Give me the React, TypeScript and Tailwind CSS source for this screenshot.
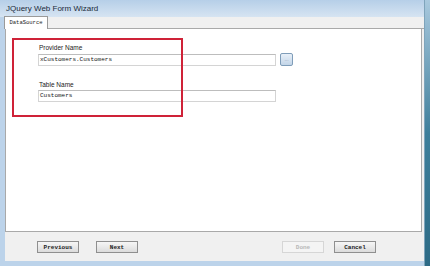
import React from "react";

// ─── Small pieces ─────────────────────────────────────────────────────────────

function Field({ label, value, browse }: { label: string; value: string; browse?: boolean }) {
  return (
    <div className="flex flex-col">
      <span className="h-[9px] pl-[1px] text-[6.5px] leading-[9px] text-[#222] font-['Liberation_Sans',sans-serif]">
        {label}
      </span>
      <div className="mt-[1px] flex items-center gap-[4px]">
        <div className="w-[238px] h-[12px] border border-[#d4d4d4] border-t-[#bdbdbd] bg-white pl-[1px] text-[6px] leading-[10px] text-[#111] font-['Liberation_Mono',monospace]">
          {value}
        </div>
        {browse && (
          <div className="w-[13px] h-[13px] rounded-[2px] border border-[#7f9db9] bg-gradient-to-b from-[#e8f0f8] to-[#c3d5e8] flex items-center justify-center">
            <span className="text-[5px] leading-[5px] text-[#8a9bb0] font-['Liberation_Sans',sans-serif]">...</span>
          </div>
        )}
      </div>
    </div>
  );
}

function WizButton({ label, disabled }: { label: string; disabled?: boolean }) {
  return (
    <div
      className={`w-[42px] h-[12px] border flex items-center justify-center text-[6px] font-bold font-['Liberation_Mono',monospace] ${
        disabled
          ? "border-[#d6d6d6] bg-[#f4f4f4] text-[#b8b8b8]"
          : "border-[#8f8f8f] bg-gradient-to-b from-[#f6f6f6] to-[#dcdcdc] text-[#222]"
      }`}
    >
      {label}
    </div>
  );
}

// ─── Wizard window ────────────────────────────────────────────────────────────

export default function App() {
  return (
    <div className="relative w-[430px] h-[266px] flex bg-[#bcd3ea] overflow-hidden">
      {/* Window body */}
      <div className="w-[424px] flex flex-col">
        {/* Title bar */}
        <div className="h-[17px] shrink-0 bg-gradient-to-b from-[#b6cfe8] to-[#d6e4f2] pl-[6px] flex items-center">
          <span className="text-[8px] text-[#1b2a3a] font-['Liberation_Sans',sans-serif]">JQuery Web Form Wizard</span>
        </div>

        <div className="flex-1 flex">
          <div className="w-[5px] shrink-0 bg-[#bcd3ea]" />

          <div className="flex-1 flex flex-col bg-[#f0f0f0]">
            {/* Tab strip */}
            <div className="h-[12px] shrink-0 flex items-end pl-[-1px] border-b border-[#a9a9a9]">
              <div className="-ml-[1px] w-[44px] h-[13px] -mb-[1px] bg-white border border-b-0 border-[#9a9a9a] flex items-center justify-center">
                <span className="text-[5.5px] text-[#222] font-['Liberation_Mono',monospace]">DataSource</span>
              </div>
            </div>

            {/* Panel */}
            <div className="h-[203px] shrink-0 mr-[2px] bg-white border-x border-b border-[#a9a9a9] pl-[32px] pt-[14px] flex flex-col gap-[14px]">
              <Field label="Provider Name" value="xCustomers.Customers" browse />
              <Field label="Table Name" value="Customers" />
            </div>

            {/* Buttons */}
            <div className="flex-1 flex items-start pt-[9px] pl-[32px] pr-[48px]">
              <WizButton label="Previous" />
              <div className="ml-[17px]">
                <WizButton label="Next" />
              </div>
              <div className="ml-auto flex gap-[10px]">
                <WizButton label="Done" disabled />
                <WizButton label="Cancel" />
              </div>
            </div>
          </div>
        </div>

        <div className="h-[5px] shrink-0 bg-[#bcd3ea]" />
      </div>

      {/* Right frame edge */}
      <div className="w-[6px] bg-gradient-to-b from-[#a9c9de] via-[#3d7f9b] to-[#2d6b86] border-l border-[#7fa4bb]" />

      {/* Highlight annotation */}
      <div className="absolute left-[12px] top-[38px] w-[171px] h-[79px] border-2 border-[#cf2238]" />
    </div>
  );
}
